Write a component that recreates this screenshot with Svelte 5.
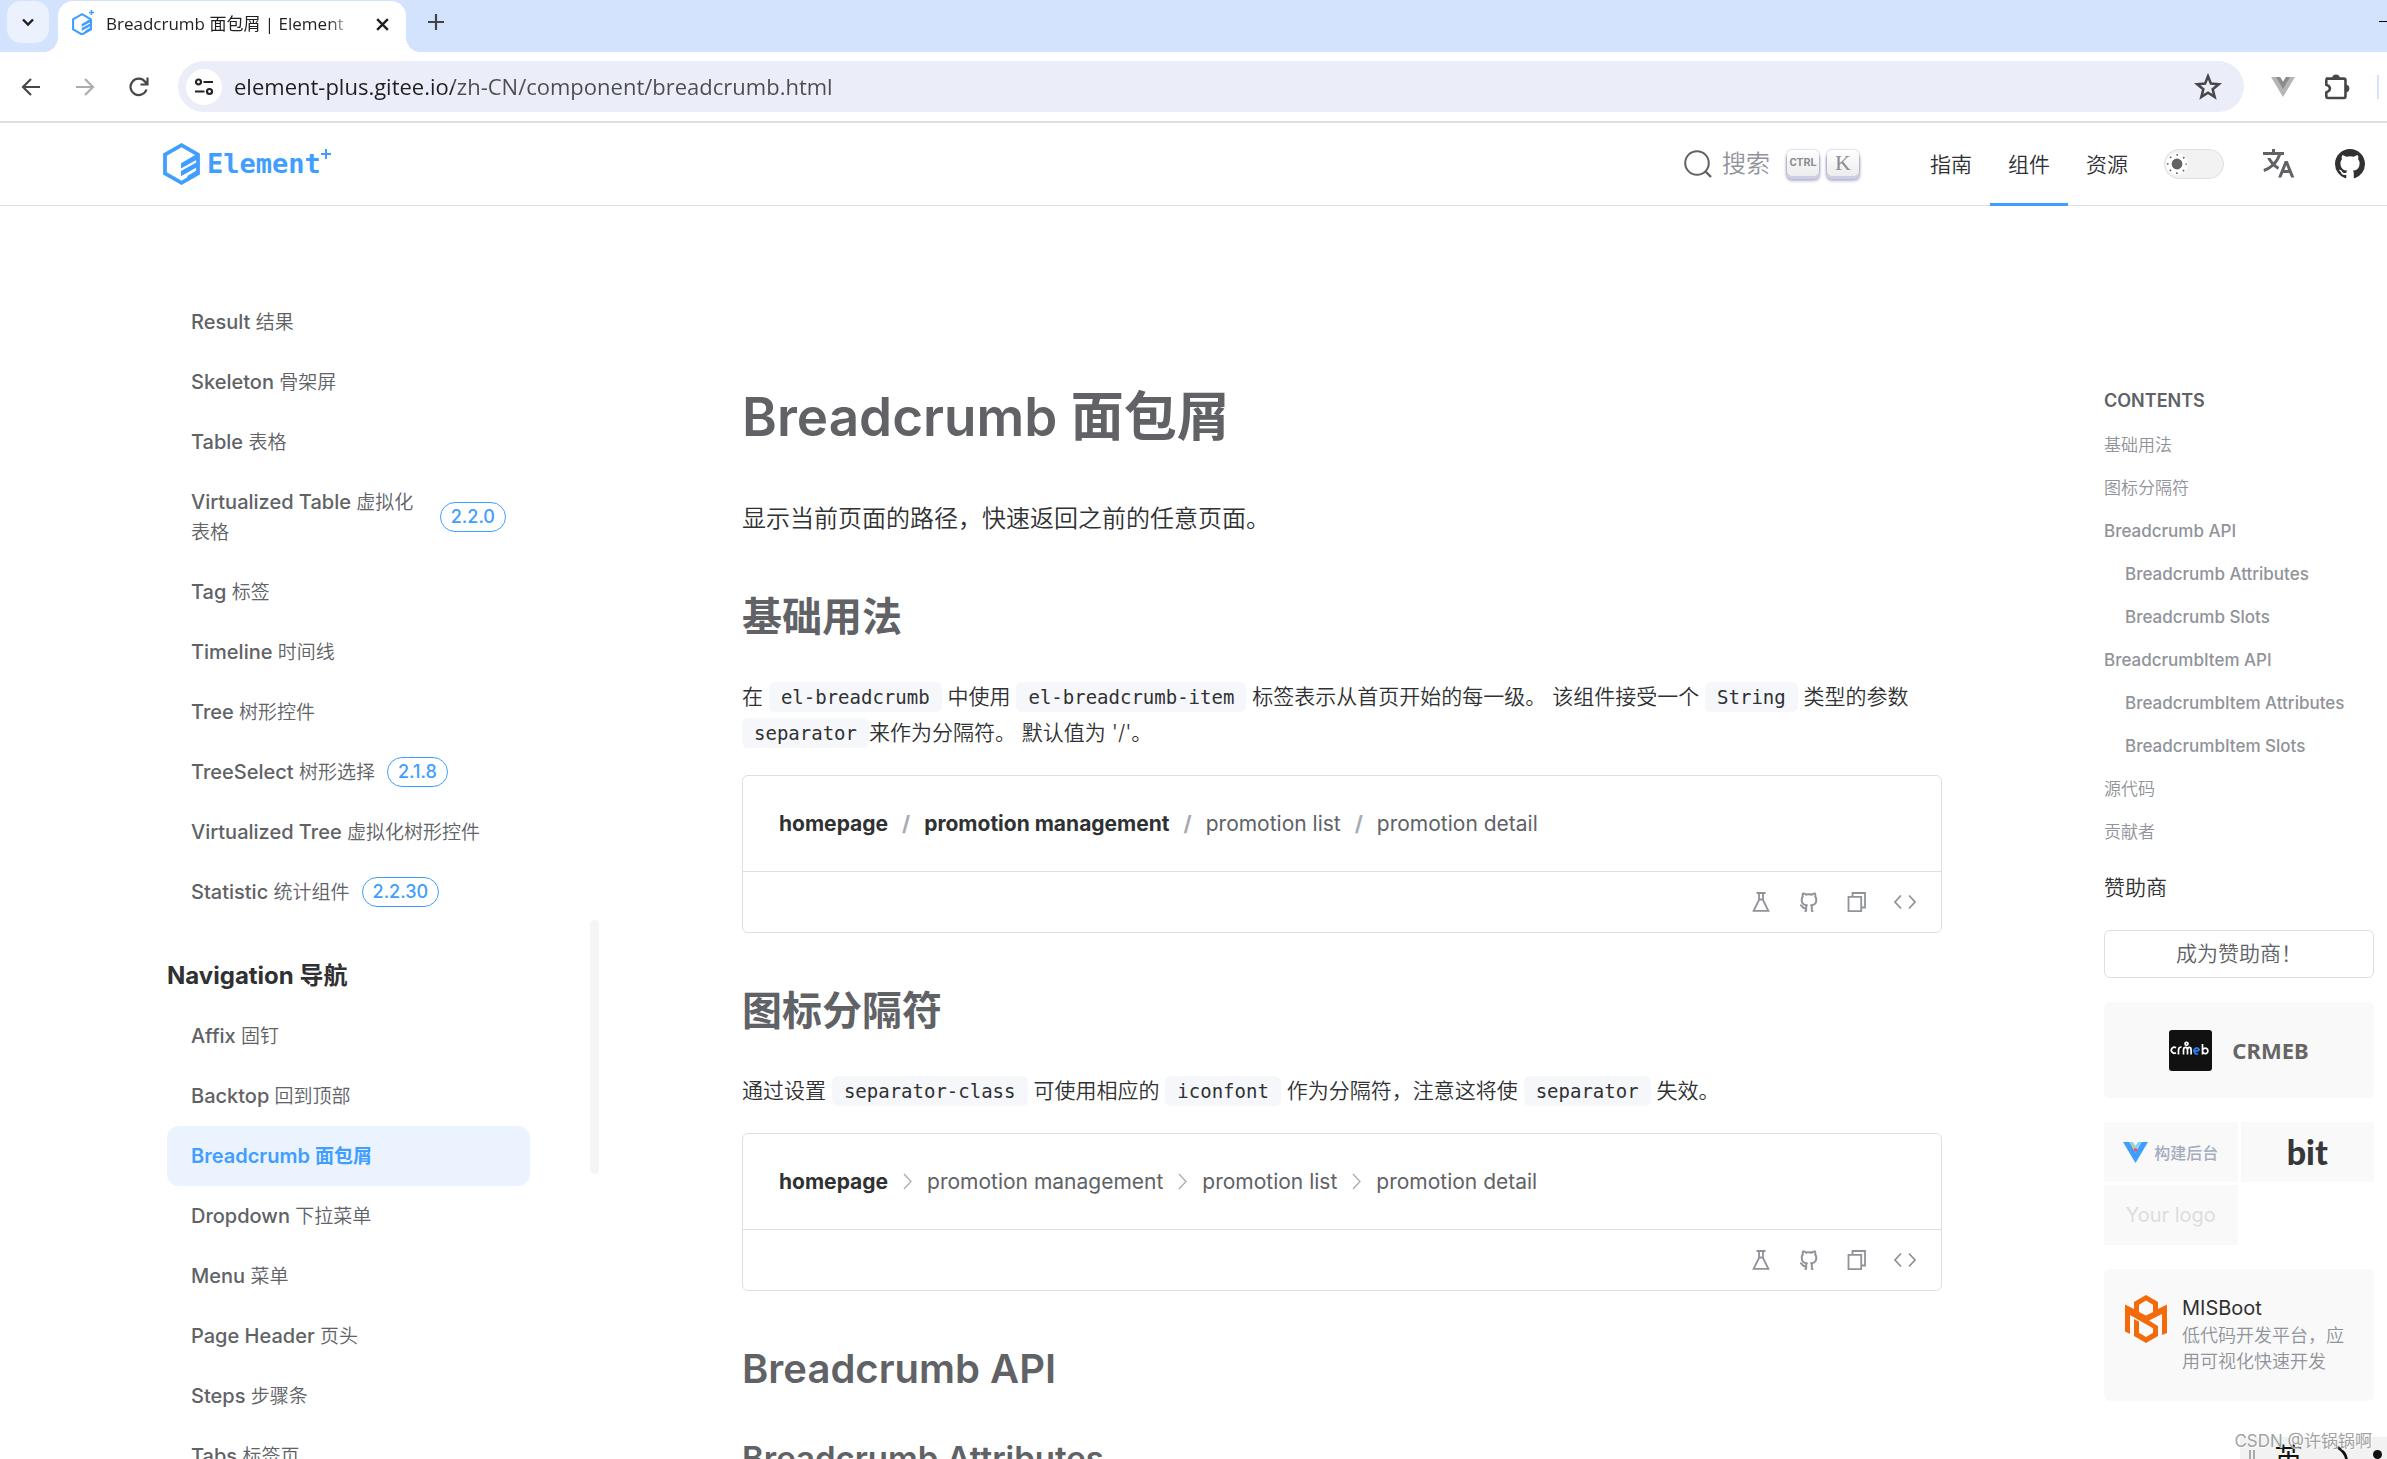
<script>
  const resultItems = [
    { en: 'Result', zh: '结果' },
    { en: 'Skeleton', zh: '骨架屏' },
    { en: 'Table', zh: '表格' },
    { en: 'Virtualized Table', zh: '虚拟化表格', tag: '2.2.0' },
    { en: 'Tag', zh: '标签' },
    { en: 'Timeline', zh: '时间线' },
    { en: 'Tree', zh: '树形控件' },
    { en: 'TreeSelect', zh: '树形选择', tag: '2.1.8' },
    { en: 'Virtualized Tree', zh: '虚拟化树形控件' },
    { en: 'Statistic', zh: '统计组件', tag: '2.2.30' },
  ];
  const navigationItems = [
    { en: 'Affix', zh: '固钉' },
    { en: 'Backtop', zh: '回到顶部' },
    { en: 'Breadcrumb', zh: '面包屑', active: true },
    { en: 'Dropdown', zh: '下拉菜单' },
    { en: 'Menu', zh: '菜单' },
    { en: 'Page Header', zh: '页头' },
    { en: 'Steps', zh: '步骤条' },
    { en: 'Tabs', zh: '标签页' },
  ];
  const contents = [
    { text: '基础用法', zh: true },
    { text: '图标分隔符', zh: true },
    { text: 'Breadcrumb API' },
    { text: 'Breadcrumb Attributes', sub: true },
    { text: 'Breadcrumb Slots', sub: true },
    { text: 'BreadcrumbItem API' },
    { text: 'BreadcrumbItem Attributes', sub: true },
    { text: 'BreadcrumbItem Slots', sub: true },
    { text: '源代码', zh: true },
    { text: '贡献者', zh: true },
  ];
  const menus = ['指南', '组件', '资源'];
  let url = $state('element-plus.gitee.io/zh-CN/component/breadcrumb.html');
  let dark = $state(false);
</script>

{#snippet mark()}
  <svg viewBox="0 0 37 42" aria-hidden="true">
    <path d="M18.5 2.2 35 11.6V30.4L18.5 39.8 2 30.4V11.6Z" fill="none" stroke="currentColor" stroke-width="3.8" />
    <path d="M18 20.2 33 11.6 36 13v2.6L18 25.6ZM18 28 36 18v5L18 33.2ZM25 32.6 36 26v5L22 38Z" fill="currentColor" />
  </svg>
{/snippet}

{#snippet menuLink(item)}
  <li>
    <a class="menu-link" class:active={item.active} href="#{item.en}">
      <span>{item.en} <span class="zh">{item.zh}</span></span>
      {#if item.tag}<span class="version">{item.tag}</span>{/if}
    </a>
  </li>
{/snippet}

{#snippet tools()}
  <div class="tools">
    <button aria-label="Playground">
      <svg viewBox="0 0 24 24"><path d="M7.5 3h9M10 3v7L4.6 20.9h14.8L14 10V3M10 9.5h4" fill="none" stroke="currentColor" stroke-width="1.8" /></svg>
    </button>
    <button aria-label="GitHub">
      <svg viewBox="0 0 24 24"><path fill="currentColor" d="M5.883 18.653c-.3-.2-.558-.455-.86-.816a50.59 50.59 0 0 1-.466-.579c-.463-.575-.755-.84-1.057-.949a1 1 0 0 1 .676-1.883c.752.27 1.261.735 1.947 1.588c-.094-.117.34.427.433.539c.19.227.33.365.44.438c.204.137.587.196 1.15.14c.023-.382.094-.753.202-1.095C5.38 15.31 3.7 13.396 3.7 9.64c0-1.24.37-2.356 1.058-3.292c-.218-.894-.185-1.975.302-3.192a1 1 0 0 1 .63-.582c.081-.024.127-.035.208-.047c.803-.123 1.937.17 3.415 1.096a11.733 11.733 0 0 1 2.687-.308c.912 0 1.819.104 2.684.308c1.477-.933 2.613-1.226 3.422-1.096c.085.013.157.03.218.05a1 1 0 0 1 .616.58c.487 1.216.52 2.296.302 3.19c.691.936 1.058 2.045 1.058 3.293c0 3.757-1.674 5.665-4.642 6.392c.125.415.19.878.19 1.38c0 .665-.002 1.299-.007 2.01c0 .19-.002.394-.005.706a1 1 0 0 1-.018 1.958c-1.14.227-1.984-.532-1.984-1.525l.002-.447l.005-.705c.005-.707.008-1.338.008-1.997c0-.697-.184-1.152-.426-1.361c-.661-.57-.326-1.654.541-1.751c2.966-.333 4.336-1.482 4.336-4.66c0-.955-.312-1.744-.913-2.404A1 1 0 0 1 17.2 6.19c.166-.414.236-.957.095-1.614l-.01.003c-.491.139-1.11.44-1.858.949a1 1 0 0 1-.833.135a9.626 9.626 0 0 0-2.592-.349c-.89 0-1.772.118-2.592.35a1 1 0 0 1-.829-.134c-.753-.507-1.374-.807-1.87-.947c-.143.653-.072 1.194.093 1.607a1 1 0 0 1-.189 1.045c-.597.655-.913 1.458-.913 2.404c0 3.172 1.371 4.328 4.322 4.66c.865.097 1.202 1.177.545 1.748c-.193.168-.43.732-.43 1.364v3.15c0 .985-.834 1.725-1.96 1.528a1 1 0 0 1-.04-1.962v-.99c-.91.061-1.661-.088-2.254-.485z" /></svg>
    </button>
    <button aria-label="Copy code">
      <svg viewBox="0 0 24 24"><path d="M7.5 6.5V3H20v14.500h-3.500M3.500 6.800h12.700V21.200H3.500Z" fill="none" stroke="currentColor" stroke-width="1.8" /></svg>
    </button>
    <button aria-label="View source">
      <svg viewBox="0 0 24 24"><path d="M8 5.500 2 12l6 6.500M16 5.500 22 12l-6 6.500" fill="none" stroke="currentColor" stroke-width="1.8" /></svg>
    </button>
  </div>
{/snippet}

{#snippet chevron()}
  <svg class="chevron" viewBox="0 0 21 21" aria-hidden="true"><path d="M7 3l7 7.500-7 7.500" fill="none" stroke="currentColor" stroke-width="1.300" /></svg>
{/snippet}

<div class="window">
  <div class="tabstrip">
    <button class="tab-search" aria-label="Search tabs">
      <svg viewBox="0 0 14 14"><path d="M2 4.500 7 9.500l5-5" fill="none" stroke="currentColor" stroke-width="2.400" /></svg>
    </button>
    <div class="tab">
      <span class="favicon">{@render mark()}<svg class="plus" viewBox="0 0 10 10"><path d="M5 0v10M0 5h10" stroke="currentColor" stroke-width="3" /></svg></span>
      <span class="tab-title">Breadcrumb 面包屑 | Element</span>
      <button class="tab-close" aria-label="Close tab">
        <svg viewBox="0 0 14 14"><path d="m2 2 10 10M12 2 2 12" stroke="currentColor" stroke-width="2.200" /></svg>
      </button>
    </div>
    <button class="tab-new" aria-label="New tab">
      <svg viewBox="0 0 16 16"><path d="M8 0v16M0 8h16" stroke="currentColor" stroke-width="2.200" /></svg>
    </button>
    <button class="minimize" aria-label="Minimize"></button>
  </div>

  <div class="toolbar">
    <div class="history">
      <button aria-label="Back"><svg viewBox="0 0 20 20"><path d="M19 10H2.500M10 2 2 10l8 8" fill="none" stroke="currentColor" stroke-width="2.200" /></svg></button>
      <button class="off" aria-label="Forward"><svg viewBox="0 0 20 20"><path d="M1 10h16.500M10 2l8 8-8 8" fill="none" stroke="currentColor" stroke-width="2.200" /></svg></button>
      <button aria-label="Reload"><svg viewBox="0 0 20 20"><path d="M17.500 12.500A8.200 8.200 0 1 1 16.300 5l1.700 2M18.500 .500v7h-7" fill="none" stroke="currentColor" stroke-width="2.200" /></svg></button>
    </div>
    <div class="omnibox">
      <button class="site-info" aria-label="Site information">
        <svg viewBox="0 0 20 18"><g fill="none" stroke="currentColor" stroke-width="2.200"><circle cx="4.500" cy="4" r="2.500" /><path d="M9.500 4H19M1 13.500h9.500" /><circle cx="15.500" cy="13.500" r="2.500" /></g></svg>
      </button>
      <input aria-label="Address" bind:value={url} />
      <button class="star" aria-label="Bookmark">
        <svg viewBox="0 0 24 24"><path d="m12 2.800 2.500 6.300 6.700.500-5.200 4.300 1.700 6.600L12 16.900l-5.700 3.600L8 13.900 2.800 9.600l6.700-.500Z" fill="none" stroke="currentColor" stroke-width="2.200" /></svg>
      </button>
    </div>
    <div class="extensions">
      <button aria-label="Vue devtools">
        <svg viewBox="0 0 24 20"><path d="M0 0h24L12 20Z" fill="#b5b5b5" /><path d="M5 0h14l-7 12Z" fill="#8c8c8c" /><path d="M9.200 0h5.600L12 4.800Z" fill="#fff" /></svg>
      </button>
      <button aria-label="Extensions">
        <svg viewBox="-2 0 26 26"><path d="M2.500 5.200h15.800a1.500 1.500 0 0 1 1.500 1.500v15a1.500 1.500 0 0 1-1.500 1.500H3.500a1.500 1.500 0 0 1-1.500-1.500V18c4.500-1.500 4.500-5.500 0-7V6.700Z" fill="none" stroke="currentColor" stroke-width="2.400" /><path d="M8 5a3 3 0 0 1 6 0ZM20 11.500a2.900 2.900 0 0 1 0 5.800Z" fill="currentColor" stroke="currentColor" /></svg>
      </button>
      <span class="divider"></span>
    </div>
  </div>

  <header>
    <a class="brand" href="#home">
      {@render mark()}
      <span>Element</span>
      <svg class="plus" viewBox="0 0 10 10" aria-hidden="true"><path d="M5 0v10M0 5h10" stroke="currentColor" stroke-width="2" /></svg>
    </a>
    <button class="search">
      <svg viewBox="0 0 28 28" aria-hidden="true"><circle cx="13" cy="13" r="11.800" fill="none" stroke="currentColor" stroke-width="2" /><path d="m21 21 6 6" stroke="currentColor" stroke-width="2.400" /></svg>
      <span>搜索</span>
      <kbd class="ctrl">CTRL</kbd>
      <kbd>K</kbd>
    </button>
    <nav class="menus">
      {#each menus as name}
        <a href="#{name}" class:current={name === '组件'}>{name}</a>
      {/each}
    </nav>
    <div class="header-tools">
      <label class="theme">
        <input type="checkbox" aria-label="Dark mode" bind:checked={dark} />
        <svg viewBox="0 0 22 22" aria-hidden="true">
          <circle cx="11" cy="11" r="5.400" fill="currentColor" />
          <circle cx="11" cy="11" r="9.200" fill="none" stroke="currentColor" stroke-width="1.700" stroke-dasharray="1.600 5.626" stroke-dashoffset=".8" />
        </svg>
      </label>
      <button aria-label="Language">
        <svg viewBox="0 0 24 24"><path fill="currentColor" d="m18.500 10l4.400 11h-2.155l-1.201-3h-4.090l-1.199 3h-2.154L16.500 10h2zM10 2v2h6v2h-1.968a18.222 18.222 0 0 1-3.620 6.301a14.864 14.864 0 0 0 2.336 1.707l-.751 1.878A17.015 17.015 0 0 1 9 13.725a16.676 16.676 0 0 1-6.201 3.548l-.536-1.929a14.700 14.700 0 0 0 5.327-3.042A18.078 18.078 0 0 1 4.767 8h2.240A16.032 16.032 0 0 0 9 10.877a16.165 16.165 0 0 0 2.910-4.876L2 6V4h6V2h2zm7.500 10.885L16.253 16h2.492L17.500 12.885z" /></svg>
      </button>
      <a class="github" href="#github" aria-label="GitHub">
        <svg viewBox="0 0 24 24"><path fill="currentColor" d="M12 2C6.475 2 2 6.475 2 12a9.994 9.994 0 0 0 6.838 9.488c.5.087.687-.213.687-.476c0-.237-.013-1.024-.013-1.862c-2.512.463-3.162-.612-3.362-1.175c-.113-.288-.6-1.175-1.025-1.413c-.35-.187-.85-.65-.013-.662c.788-.013 1.350.725 1.538 1.025c.9 1.512 2.338 1.087 2.912.825c.088-.65.35-1.087.638-1.337c-2.225-.25-4.550-1.113-4.550-4.938c0-1.088.387-1.987 1.025-2.688c-.1-.25-.45-1.275.1-2.650c0 0 .837-.262 2.750 1.026a9.280 9.280 0 0 1 2.500-.338c.85 0 1.700.112 2.500.337c1.912-1.300 2.750-1.024 2.750-1.024c.55 1.375.2 2.400.1 2.650c.637.7 1.025 1.587 1.025 2.687c0 3.838-2.337 4.688-4.562 4.938c.362.312.675.912.675 1.850c0 1.337-.013 2.412-.013 2.750c0 .262.188.574.688.474A10.016 10.016 0 0 0 22 12c0-5.525-4.475-10-10-10z" /></svg>
      </a>
    </div>
  </header>

  <div class="page">
    <aside class="sidebar">
      <ul>
        {#each resultItems as item}{@render menuLink(item)}{/each}
      </ul>
      <h2>Navigation 导航</h2>
      <ul>
        {#each navigationItems as item}{@render menuLink(item)}{/each}
      </ul>
      <span class="scroll-thumb"></span>
    </aside>

    <main>
      <h1>Breadcrumb 面包屑</h1>
      <p class="lead">显示当前页面的路径，快速返回之前的任意页面。</p>

      <h2>基础用法</h2>
      <p>在 <code>el-breadcrumb</code> 中使用 <code>el-breadcrumb-item</code> 标签表示从首页开始的每一级。 该组件接受一个 <code>String</code> 类型的参数 <code>separator</code>来作为分隔符。 默认值为 '/'。</p>
      <section class="demo">
        <ol class="crumbs">
          <li><a href="#homepage">homepage</a></li>
          <li class="slash">/</li>
          <li><a href="#management">promotion management</a></li>
          <li class="slash">/</li>
          <li>promotion list</li>
          <li class="slash">/</li>
          <li>promotion detail</li>
        </ol>
        {@render tools()}
      </section>

      <h2>图标分隔符</h2>
      <p>通过设置 <code>separator-class</code> 可使用相应的 <code>iconfont</code> 作为分隔符，注意这将使 <code>separator</code> 失效。</p>
      <section class="demo">
        <ol class="crumbs">
          <li><a href="#homepage">homepage</a></li>
          <li>{@render chevron()}promotion management</li>
          <li>{@render chevron()}promotion list</li>
          <li>{@render chevron()}promotion detail</li>
        </ol>
        {@render tools()}
      </section>

      <h2>Breadcrumb API</h2>
      <h3>Breadcrumb Attributes</h3>
    </main>

    <aside class="toc">
      <h2>CONTENTS</h2>
      <ul>
        {#each contents as entry}
          <li class:sub={entry.sub} class:zh={entry.zh}><a href="#{entry.text}">{entry.text}</a></li>
        {/each}
      </ul>
      <h3>赞助商</h3>
      <a class="join" href="#sponsor">成为赞助商！</a>
      <a class="card crmeb" href="#crmeb">
        <svg viewBox="0 0 43 43" aria-hidden="true">
          <rect y="1" width="43" height="41" rx="3" fill="#111" />
          <g fill="none" stroke="#fff" stroke-width="1.700">
            <path d="M7 18.700a3 3 0 1 0 0 5M9.500 25.500v-4.500q0-3 3-3M14.500 25.500v-4.500q0-2.600 2-2.600t2 2.600v4.500-4.500q0-2.600 1.800-2.600t1.800 2.600v4.500" />
            <circle cx="17.500" cy="14.800" r="1.500" />
            <path d="M33.500 15v10.500M33.500 21.700a2.700 2.700 0 1 1 0 .4" />
          </g>
          <path d="M25 22.200q5 0 5-1.700a2.600 2.900 0 1 0-1 4" fill="none" stroke="#2a7cf0" stroke-width="1.900" />
        </svg>
        <strong>CRMEB</strong>
      </a>
      <div class="logos">
        <a class="vform" href="#vform">
          <svg viewBox="0 0 25 21" aria-hidden="true"><path d="M0 0h6.500l6 10.500L18.500 0H25L12.500 21Z" fill="#409eff" /><path d="M6.500 0H10l2.500 4L15 0h3.500l-6 10.500Z" fill="#7fd3f7" /><path d="m8 1 4 4-1 3Z" fill="#f5c542" /><circle cx="12.500" cy="8" r="1.800" fill="#f0506e" /></svg>
          <span>构建后台</span>
        </a>
        <a class="bit" href="#bit">bit</a>
        <a class="empty" href="#your-logo">Your logo</a>
      </div>
      <a class="card misboot" href="#misboot">
        <svg viewBox="0 0 42 48" aria-hidden="true">
          <path d="M0 9.500 9 14V7l12-7 12 7v7l9-4.500V38l-5 2V19L24 25.500l9 5.500v10l-12 7-12-7V24l5 2.700v11l7 4.300 7-4.300v-4.500L5 20v19l-5-2.500ZM14 17l7 3.600 7-3.600V9.700l-7-4.200-7 4.200Z" fill="#f26a0a" />
        </svg>
        <span class="text">
          <span class="name">MISBoot</span>
          <span class="desc">低代码开发平台，应用可视化快速开发</span>
        </span>
      </a>
    </aside>
  </div>

  <div class="ime">
    <span class="grip"></span>
    <span>英</span>
    <svg viewBox="0 0 20 26" aria-hidden="true"><path d="M4 2q14 8 8 24" fill="none" stroke="#111" stroke-width="2.600" /></svg>
    <i></i>
  </div>
  <div class="watermark">CSDN @许锅锅啊</div>
</div>

<style>
  :global(body) {
    margin: 0;
    background: #fff;
  }
  .window {
    position: relative;
    height: 100vh;
    overflow: hidden;
    display: flex;
    flex-direction: column;
    font-family: Inter, 'Noto Sans CJK SC', sans-serif;
    color: #303133;
  }
  h1,
  h2,
  h3,
  p,
  ul,
  ol {
    margin: 0;
    padding: 0;
    list-style: none;
  }
  a {
    color: inherit;
    text-decoration: none;
  }
  button {
    display: flex;
    align-items: center;
    justify-content: center;
    padding: 0;
    border: 0;
    background: none;
    color: inherit;
    font: inherit;
    cursor: pointer;
  }
  svg {
    display: block;
    flex: none;
  }

  /* browser chrome */
  .tabstrip {
    flex: none;
    display: flex;
    align-items: flex-start;
    height: 52px;
    background: #d3e3fd;
    color: #1f1f1f;
    font-family: 'Open Sans', 'Noto Sans CJK SC', sans-serif;
  }
  .tab-search {
    width: 42px;
    height: 42px;
    margin: 1px 9px 0 7px;
    border-radius: 14px;
    background: #ebf1fd;
  }
  .tab-search svg {
    width: 14px;
  }
  .tab {
    position: relative;
    display: flex;
    align-items: center;
    width: 348px;
    height: 51px;
    margin-top: 1px;
    padding: 0 0 5px 14px;
    box-sizing: border-box;
    border-radius: 15px 15px 0 0;
    background: #fff;
  }
  .tab::before,
  .tab::after {
    content: '';
    position: absolute;
    bottom: 0;
    width: 15px;
    height: 15px;
  }
  .tab::before {
    right: 100%;
    background: radial-gradient(circle at 0 0, transparent 15px, #fff 15px);
  }
  .tab::after {
    left: 100%;
    background: radial-gradient(circle at 100% 0, transparent 15px, #fff 15px);
  }
  .favicon {
    position: relative;
    width: 20px;
    margin-right: 14px;
    color: #409eff;
  }
  .favicon .plus {
    position: absolute;
    top: -3px;
    right: -2px;
    width: 5px;
  }
  .tab-title {
    width: 252px;
    overflow: hidden;
    white-space: nowrap;
    font-size: 17px;
    line-height: 28px;
    mask-image: linear-gradient(90deg, #000 222px, transparent 248px);
  }
  .tab-close {
    width: 28px;
    height: 28px;
    margin-left: 10px;
  }
  .tab-close svg {
    width: 15px;
  }
  .tab-new {
    width: 42px;
    height: 42px;
    margin: 1px 0 0 9px;
    color: #444;
  }
  .tab-new svg {
    width: 16px;
  }
  .minimize {
    width: 8px;
    height: 1px;
    margin: 21px 0 0 auto;
    background: #000;
  }
  .toolbar {
    flex: none;
    display: flex;
    align-items: center;
    height: 69px;
    border-bottom: 2px solid #e0e0e0;
    color: #474747;
  }
  .history {
    display: flex;
    gap: 34px;
    padding: 0 29px 0 21px;
  }
  .history svg {
    width: 20px;
  }
  .off {
    color: #adadad;
  }
  .omnibox {
    flex: 1;
    display: flex;
    align-items: center;
    height: 51px;
    border-radius: 26px;
    background: #ebeef8;
  }
  .site-info {
    width: 36px;
    height: 36px;
    margin: 0 12px 0 8px;
    border-radius: 50%;
    background: #fff;
    color: #222;
  }
  .site-info svg {
    width: 20px;
  }
  .omnibox input {
    flex: 1;
    min-width: 0;
    height: 38px;
    margin-bottom: 2px;
    padding: 0;
    border: 0;
    outline: 0;
    background: linear-gradient(90deg, #1f1f1f 219px, #4c4c4c 219px);
    background-clip: text;
    color: transparent;
    font-family: 'Open Sans', sans-serif;
    font-size: 22px;
  }
  .star {
    margin-right: 22px;
  }
  .star svg {
    width: 28px;
  }
  .extensions {
    display: flex;
    align-items: center;
    gap: 27px;
    padding: 0 8px 0 27px;
  }
  .extensions button:first-child svg {
    width: 24px;
  }
  .extensions button:nth-child(2) svg {
    width: 28px;
  }
  .divider {
    width: 2px;
    height: 24px;
    background: #d3e3fd;
  }

  /* site header */
  header {
    flex: none;
    display: flex;
    align-items: center;
    height: 82px;
    padding: 0 19px 0 163px;
    border-bottom: 1px solid #dcdfe6;
  }
  .brand {
    display: flex;
    align-items: center;
    margin-right: auto;
    color: #409eff;
    font: bold 27px/42px 'DejaVu Sans Mono', monospace;
  }
  .brand svg {
    width: 37px;
    margin-right: 7px;
  }
  .brand .plus {
    align-self: flex-start;
    width: 10px;
    margin: 6px 0 0;
  }
  .search {
    color: #606266;
    font-size: 24px;
    margin-right: 53px;
  }
  .search svg {
    width: 28px;
    margin-right: 10px;
  }
  .search span {
    margin-right: 17px;
    line-height: 36px;
    color: #909399;
    font-weight: 350;
  }
  kbd {
    width: 32px;
    height: 26px;
    margin-bottom: 3px;
    border-radius: 5px;
    background: linear-gradient(#fff, #ececec);
    box-shadow:
      0 3px 0 #cdcde6,
      0 4px 3px 1px rgba(60, 60, 130, 0.4),
      0 0 2px rgba(60, 60, 130, 0.5);
    color: #8b8e94;
    font: 22px/26px 'Liberation Serif', serif;
    text-align: center;
  }
  kbd.ctrl {
    margin-right: 8px;
    font: bold 11px/26px 'Roboto', sans-serif;
  }
  .menus {
    display: flex;
    align-self: stretch;
    margin-bottom: -1px;
  }
  .menus a {
    padding: 0 18px;
    font-size: 21px;
    font-weight: 350;
    line-height: 83px;
  }
  .menus .current {
    box-shadow: inset 0 -3px #409eff;
  }
  .header-tools {
    display: flex;
    align-items: center;
    gap: 36px;
    padding-left: 18px;
    color: #606266;
  }
  .header-tools button svg,
  .github svg {
    width: 36px;
  }
  .github {
    color: #303133;
  }
  .theme {
    display: flex;
    align-items: center;
    width: 60px;
    height: 30px;
    padding-left: 1px;
    box-sizing: border-box;
    border: 1px solid #dcdfe6;
    border-radius: 15px;
    background: #f2f2f2;
  }
  .theme input {
    position: absolute;
    opacity: 0;
  }
  .theme svg {
    width: 22px;
    border-radius: 50%;
    background: #fff;
  }

  /* page body */
  .page {
    flex: 1;
    min-height: 0;
    display: grid;
    grid-template-columns: 600px minmax(0, 1fr) 283px;
  }
  .sidebar {
    position: relative;
    padding: 86px 70px 0 167px;
  }
  .sidebar h2 {
    padding: 36px 0 12px;
    font-size: 24px;
    font-weight: 700;
    line-height: 36px;
  }
  .menu-link {
    display: flex;
    align-items: center;
    gap: 12px;
    padding: 15px 24px;
    border-radius: 12px;
    color: #606266;
    font-size: 20px;
    font-weight: 500;
    line-height: 30px;
  }
  .menu-link .zh {
    font-size: 19px;
    font-weight: 350;
    line-height: 20px;
  }
  .menu-link.active,
  .active .zh {
    color: #409eff;
    font-weight: 600;
  }
  .menu-link.active {
    background: #ebf3ff;
  }
  .version {
    flex: none;
    padding: 0 10px;
    border: 1px solid #409eff;
    border-radius: 15px;
    color: #409eff;
    font-size: 18px;
    line-height: 28px;
  }
  .scroll-thumb {
    position: absolute;
    top: 714px;
    right: 1px;
    width: 9px;
    height: 254px;
    border-radius: 5px;
    background: #f5f5f5;
  }

  main {
    padding: 179px 162px 0 142px;
  }
  main :is(h1, h2, h3) {
    color: #606266;
    font-weight: 600;
  }
  h1 {
    font-size: 53px;
    line-height: 64px;
  }
  main h2 {
    margin-top: 54px;
    font-size: 40px;
    line-height: 48px;
  }
  main h3 {
    margin-top: 45px;
    font-size: 33px;
    line-height: 40px;
  }
  main p {
    margin-top: 38px;
    font-size: 21px;
    font-weight: 350;
    line-height: 36px;
  }
  main .lead {
    margin-top: 50px;
    font-size: 24px;
    line-height: 40px;
  }
  code {
    padding: 4px 12px;
    border-radius: 6px;
    background: #f5f7fa;
    font-family: 'DejaVu Sans Mono', monospace;
    font-size: 19px;
  }
  .demo {
    margin-top: 24px;
    border: 1px solid #dcdfe6;
    border-radius: 6px;
  }
  .crumbs {
    display: flex;
    padding: 36px;
    color: #606266;
    font-size: 21px;
    line-height: 23px;
  }
  .crumbs li {
    display: flex;
    align-items: center;
  }
  .crumbs a {
    color: #303133;
    font-weight: 700;
  }
  .crumbs .slash {
    margin: 0 14px;
    color: #a8abb2;
    font-weight: 700;
  }
  .chevron {
    width: 21px;
    margin: 0 9px;
    color: #a8abb2;
  }
  .tools {
    display: flex;
    align-items: center;
    justify-content: flex-end;
    gap: 24px;
    height: 60px;
    padding: 0 24px;
    border-top: 1px solid #dcdfe6;
    color: #909399;
  }
  .tools svg {
    width: 24px;
  }

  .toc {
    padding: 181px 13px 0 0;
  }
  .toc h2 {
    padding-bottom: 2px;
    color: #606266;
    font-size: 18px;
    font-weight: 600;
    line-height: 27px;
  }
  .toc li {
    margin-top: 16px;
    color: #909399;
    font-size: 17px;
    font-weight: 500;
    line-height: 27px;
  }
  .toc .zh {
    font-weight: 350;
  }
  .toc .sub {
    padding-left: 21px;
  }
  .toc h3 {
    margin: 26px 0;
    font-size: 21px;
    font-weight: 350;
    line-height: 32px;
  }
  .join {
    display: block;
    border: 1px solid #dcdfe6;
    border-radius: 6px;
    color: #606266;
    font-size: 21px;
    font-weight: 350;
    line-height: 46px;
    text-align: center;
  }
  .card {
    display: flex;
    margin-top: 24px;
    border-radius: 6px;
    background: #f9f9f9;
  }
  .crmeb {
    align-items: center;
    justify-content: center;
    gap: 20px;
    height: 96px;
  }
  .crmeb svg {
    width: 43px;
  }
  .crmeb strong {
    color: #666;
    font: bold 22px/32px 'Noto Sans', sans-serif;
  }
  .logos {
    display: grid;
    grid-template-columns: 1fr 1fr;
    gap: 3px;
    margin-top: 24px;
  }
  .logos a {
    display: flex;
    align-items: center;
    justify-content: center;
    height: 60px;
    background: #f9f9f9;
  }
  .vform {
    gap: 6px;
    color: #a3adbd;
    font-size: 16px;
    font-weight: 500;
  }
  .vform svg {
    width: 25px;
  }
  .logos .bit {
    color: #373737;
    font: 900 34px/40px Lato, sans-serif;
  }
  .empty {
    color: #ddd;
    font-size: 20px;
  }
  .misboot {
    align-items: flex-start;
    gap: 15px;
    padding: 24px 24px 26px 21px;
  }
  .misboot svg {
    width: 42px;
    margin-top: 2px;
  }
  .text {
    display: flex;
    flex-direction: column;
  }
  .name {
    font-size: 20px;
    line-height: 30px;
  }
  .desc {
    color: #909399;
    font-size: 18px;
    font-weight: 350;
    line-height: 26px;
  }

  /* floating over the page */
  .ime {
    position: absolute;
    right: 0;
    bottom: 0;
    display: flex;
    align-items: flex-start;
    width: 147px;
    height: 22px;
    overflow: hidden;
    background: #f2f2f2;
    color: #111;
    font-size: 29px;
    line-height: 46px;
  }
  .grip {
    width: 2px;
    height: 24px;
    margin: 13px 19px 0 9px;
    border: solid #aaa;
    border-width: 0 2px;
  }
  .ime svg {
    width: 20px;
    margin: 8px 20px 0 30px;
  }
  .ime i {
    width: 9px;
    height: 9px;
    margin-top: 13px;
    border-radius: 50%;
    background: #111;
  }
  .watermark {
    position: absolute;
    right: 15px;
    bottom: 4px;
    color: rgba(150, 150, 150, 0.9);
    font-size: 17px;
    line-height: 28px;
    text-shadow: 1px 1px 1px #fff;
  }
</style>
